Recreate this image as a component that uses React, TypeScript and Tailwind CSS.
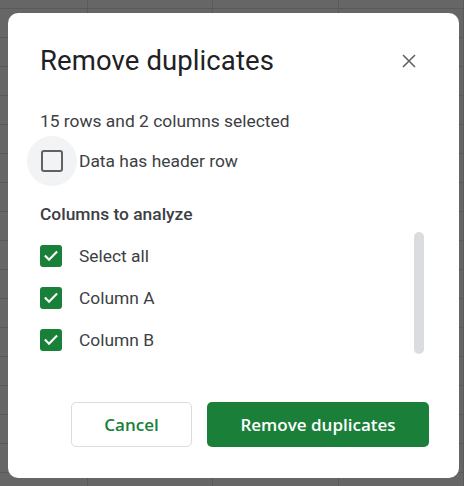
import React from "react";

const Check = () => (
  <div className="w-[22px] h-[22px] rounded-[3px] bg-[#188038] flex items-center justify-center">
    <svg width="16" height="16" viewBox="0 0 24 24" fill="none">
      <path d="M4 12.5l5 5L20 6.5" stroke="white" strokeWidth="3.2" strokeLinecap="square" />
    </svg>
  </div>
);

const rows = ["Select all", "Column A", "Column B"];

const App = () => {
  const cells = Array.from({ length: 4 * 18 });
  return (
    <div className="relative w-[464px] h-[486px] overflow-hidden bg-[#666666] font-['Roboto',sans-serif]">
      {/* sheet behind the dialog */}
      <div className="grid grid-cols-[88px_125px_126px_125px] auto-rows-[29px] -mt-[20px]">
        {cells.map((_, i) => (
          <div key={i} className="border-r border-b border-[#5a5a5a]" />
        ))}
      </div>

      <div className="absolute left-[8px] top-[13px] w-[451px] h-[465px] bg-white rounded-[10px] pt-[32px] pl-[32px] pr-[30px] pb-[31px] flex flex-col">
        <div className="flex items-center justify-between h-8">
          <h1 className="text-[27.5px] text-[#202124] leading-8 tracking-[0.1px]">Remove duplicates</h1>
          <svg width="16" height="16" viewBox="0 0 16 16" className="mr-[12px]">
            <path d="M2 2l12 12M14 2L2 14" stroke="#5f6368" strokeWidth="1.6" />
          </svg>
        </div>

        <p className="mt-[32px] text-[17.4px] leading-6 text-[#3c4043]">15 rows and 2 columns selected</p>

        <div className="mt-[3px] flex items-center h-[50px]">
          <div className="-ml-[13px] w-[50px] h-[50px] rounded-full bg-[#f1f3f4] flex items-center justify-center">
            <div className="w-[22px] h-[22px] rounded-[3px] border-2 border-[#5f6368]" />
          </div>
          <span className="ml-[2px] text-[17.4px] text-[#3c4043]">Data has header row</span>
        </div>

        <p className="mt-[16px] text-[17.4px] leading-6 font-medium text-[#3c4043]">Columns to analyze</p>

        <div className="mt-[9px] flex">
          <div className="flex flex-col">
            {rows.map((r) => (
              <div key={r} className="h-[42px] flex items-center gap-[17px]">
                <Check />
                <span className="text-[17.4px] text-[#3c4043]">{r}</span>
              </div>
            ))}
          </div>
          <div className="ml-auto mr-[5px] -mt-[3px] w-[10px] h-[122px] rounded-full bg-[#dadce0]" />
        </div>

        <div className="mt-auto flex justify-end gap-[15px] font-['Open_Sans',sans-serif]">
          <button className="w-[121px] h-[45px] rounded-[5px] border border-[#dadce0] text-[17px] font-semibold text-[#188038]">
            Cancel
          </button>
          <button className="w-[222px] h-[45px] rounded-[5px] bg-[#1a8039] text-[17px] font-semibold text-white">
            Remove duplicates
          </button>
        </div>
      </div>
    </div>
  );
};

export default App;
